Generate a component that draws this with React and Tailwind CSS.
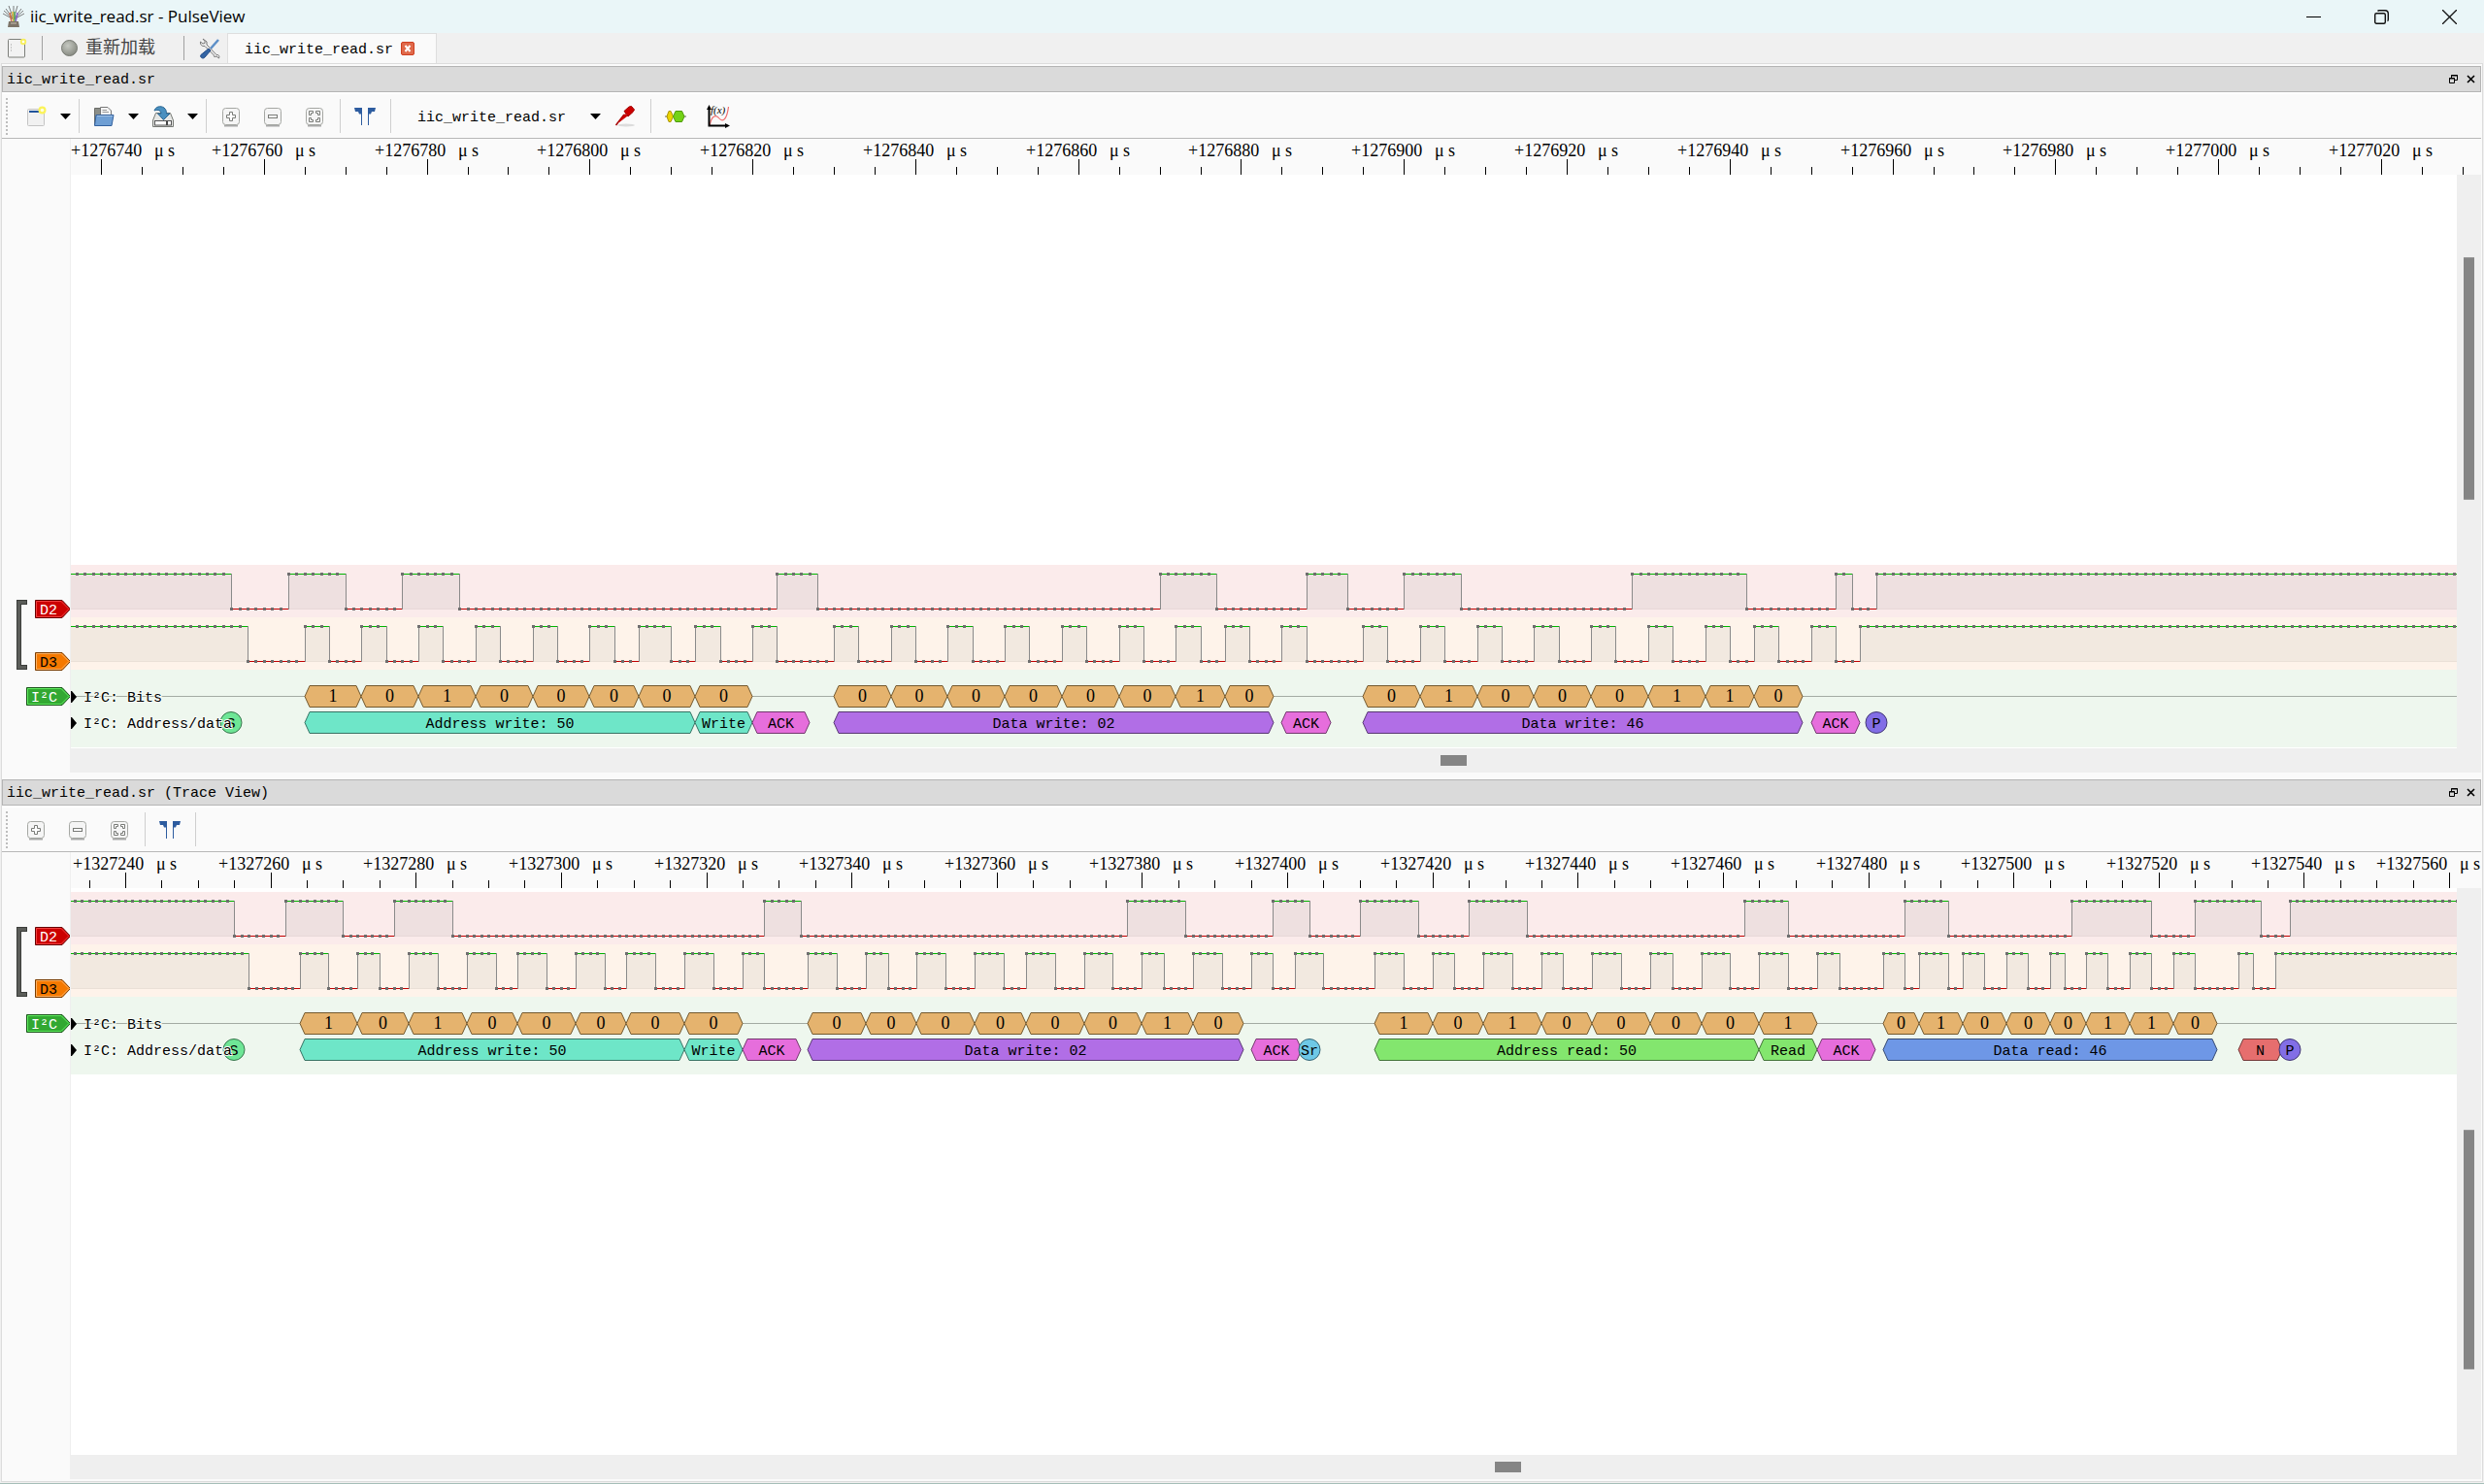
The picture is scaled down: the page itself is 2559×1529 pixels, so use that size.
import { useState } from 'react'

const mono = "font-['Liberation_Mono','Noto_Sans_CJK_SC',monospace]"

const COLORS = {
  bit: ['#e5b36e', '#73592f'],
  addrWrite: ['#6ee6c8', '#377364'],
  addrRead: ['#83e66e', '#417337'],
  ack: ['#e66edc', '#73376e'],
  nack: ['#e66e6e', '#733737'],
  dataWrite: ['#b16ee6', '#583773'],
  dataRead: ['#6e97e6', '#374b73'],
  start: ['#6ee696', '#37734b'],
  restart: ['#6ec8e6', '#376473'],
  stop: ['#826ee6', '#413773'],
}

// edge lists hold the sample numbers where the level toggles, both lines idle high
const MAIN_VIEW = {
  base: 1276740,
  x0: 31,
  step: 8.389,
  last: 300,
  lastLabel: 280,
  labelOffsets: { 0: 0 },
  d2: [16, 23, 30, 37, 44, 83, 88, 130, 137, 148, 153, 160, 167, 188, 202, 213, 215, 218],
  d3: [
    18, 25, 28, 32, 35, 39, 42, 46, 49, 53, 56, 60, 63, 66, 70, 73, 76, 80, 83,
    90, 93, 97, 100, 104, 107, 111, 114, 118, 121, 125, 128, 132, 135, 138, 141, 145, 148,
    155, 158, 162, 165, 169, 172, 176, 179, 183, 186, 190, 193, 197, 200, 203, 206, 210, 213, 216,
  ],
  bits: [
    { at: [25, 32, 39, 46, 53, 60, 66, 73, 80], value: '10100000' },
    { at: [90, 97, 104, 111, 118, 125, 132, 138, 144], value: '00000010' },
    { at: [155, 162, 169, 176, 183, 190, 197, 203, 209], value: '01000110' },
  ],
  frames: [
    { from: 25, to: 73, text: 'Address write: 50', kind: 'addrWrite' },
    { from: 73, to: 80, text: 'Write', kind: 'addrWrite' },
    { from: 80, to: 87, text: 'ACK', kind: 'ack' },
    { from: 90, to: 144, text: 'Data write: 02', kind: 'dataWrite' },
    { from: 145, to: 151, text: 'ACK', kind: 'ack' },
    { from: 155, to: 209, text: 'Data write: 46', kind: 'dataWrite' },
    { from: 210, to: 216, text: 'ACK', kind: 'ack' },
  ],
  marks: [
    { at: 16, text: 'S', kind: 'start' },
    { at: 218, text: 'P', kind: 'stop' },
  ],
}

const TRACE_VIEW = {
  base: 1327240,
  x0: 56,
  step: 7.4816,
  last: 330,
  lastLabel: 320,
  labelOffsets: { 320: 2375 },
  d2: [15, 22, 30, 37, 45, 88, 93, 138, 146, 158, 163, 170, 178, 185, 193, 223, 229, 245, 251, 268, 279, 285, 294, 298],
  d3: [
    17, 24, 28, 32, 35, 39, 43, 47, 51, 54, 58, 62, 66, 69, 73, 77, 81, 85, 88,
    94, 98, 102, 105, 109, 113, 117, 121, 124, 128, 132, 136, 140, 143, 147, 151, 155, 158, 161, 165,
    172, 176, 180, 183, 187, 191, 195, 198, 202, 206, 210, 213, 217, 221, 225, 229, 233, 236,
    242, 245, 247, 251, 253, 256, 259, 262, 265, 267, 270, 273, 276, 279, 282, 285, 291, 293, 296,
  ],
  bits: [
    { at: [24, 32, 39, 47, 54, 62, 69, 77, 85], value: '10100000' },
    { at: [94, 102, 109, 117, 124, 132, 140, 147, 154], value: '00000010' },
    { at: [172, 180, 187, 195, 202, 210, 217, 225, 233], value: '10100001' },
    { at: [242, 247, 253, 259, 265, 270, 276, 282, 288], value: '01000110' },
  ],
  frames: [
    { from: 24, to: 77, text: 'Address write: 50', kind: 'addrWrite' },
    { from: 77, to: 85, text: 'Write', kind: 'addrWrite' },
    { from: 85, to: 93, text: 'ACK', kind: 'ack' },
    { from: 94, to: 154, text: 'Data write: 02', kind: 'dataWrite' },
    { from: 155, to: 162, text: 'ACK', kind: 'ack' },
    { from: 172, to: 225, text: 'Address read: 50', kind: 'addrRead' },
    { from: 225, to: 233, text: 'Read', kind: 'addrRead' },
    { from: 233, to: 241, text: 'ACK', kind: 'ack' },
    { from: 242, to: 288, text: 'Data read: 46', kind: 'dataRead' },
    { from: 291, to: 297, text: 'N', kind: 'nack' },
  ],
  marks: [
    { at: 15, text: 'S', kind: 'start' },
    { at: 163, text: 'Sr', kind: 'restart' },
    { at: 298, text: 'P', kind: 'stop' },
  ],
}

const px = (view, t) => Math.round(view.x0 + t * view.step)

/* ---------- waveforms ---------- */

function Ruler({ view }) {
  const ticks = []
  for (let t = -15; t <= view.last; t += 5) ticks.push(t)
  const majors = ticks.filter(t => t % 20 === 0 && t >= 0 && t <= view.lastLabel)
  return (
    <svg className="block h-[37px] w-full" aria-label="Time ruler">
      {ticks.map(t => (
        <rect key={t} x={px(view, t)} y={t % 20 === 0 ? 21 : 29} width="1" height={t % 20 === 0 ? 16 : 8} fill="#000" />
      ))}
      {majors.map(t => {
        const left = view.labelOffsets[t] ?? px(view, t) - 54
        return (
          <text key={t} y="18" className="font-['Liberation_Serif',serif] text-[18px]">
            <tspan x={left}>+{view.base + t}</tspan>
            <tspan x={left + 86}>μ</tspan>
            <tspan x={left + 100}>s</tspan>
          </text>
        )
      })}
    </svg>
  )
}

function LogicTrace({ view, edges, top, bg, fill }) {
  const high = top + 9
  const low = top + 45
  const points = [-20, ...edges, view.last]
  let dots = ''
  for (let t = -8, level = 1, i = 0; t <= view.last; t++) {
    while (i < edges.length && edges[i] <= t) {
      level = 1 - level
      i++
    }
    dots += `M${px(view, t) - 1} ${(level ? high : low) + 0.5}h3`
  }
  return (
    <g shapeRendering="crispEdges">
      <rect y={top} width="100%" height="54" fill={bg} />
      <rect y={low} width="100%" height="1" fill="#000" opacity="0.08" />
      {points.slice(0, -1).map((t, i) => {
        const a = px(view, t)
        const b = px(view, points[i + 1])
        const isHigh = i % 2 === 0
        return (
          <g key={t}>
            {isHigh && <rect x={a} y={high} width={b - a} height="36" fill={fill} />}
            <rect x={a} y={isHigh ? high : low} width={b - a} height="1" fill={isHigh ? '#00b400' : '#c00000'} />
            {i > 0 && <rect x={a} y={high} width="1" height="37" fill="#8a8a8a" />}
          </g>
        )
      })}
      <path d={dots} stroke="#6e6e6e" strokeWidth="3" />
    </g>
  )
}

function Hex({ x1, x2, cy, kind, text, textClass }) {
  const [fill, stroke] = COLORS[kind]
  return (
    <g>
      <path
        d={`M${x1} ${cy}L${x1 + 5} ${cy - 11}H${x2 - 5}L${x2} ${cy}L${x2 - 5} ${cy + 11}H${x1 + 5}Z`}
        fill={fill}
        stroke={stroke}
      />
      <text x={(x1 + x2) / 2} y={cy + 5} textAnchor="middle" className={textClass}>{text}</text>
    </g>
  )
}

function RowLabel({ y, children }) {
  return (
    <g>
      <path d={`M0 ${y - 11}h1l5 6l-5 6h-1z`} fill="#000" />
      <text x="13" y={y} className={`${mono} stroke-[#f6fbf6] stroke-[2px] text-[15px] [paint-order:stroke]`}>{children}</text>
    </g>
  )
}

function Traces({ view }) {
  return (
    <svg className="block h-[188px] w-full shrink-0" aria-label="Signal traces">
      <LogicTrace view={view} edges={view.d2} top={0} bg="#fbebeb" fill="#eee0e0" />
      <LogicTrace view={view} edges={view.d3} top={54} bg="#fef3ea" fill="#f2e9e0" />
      <rect y="108" width="100%" height="80" fill="#eef7ee" />
      <rect y="135" width="100%" height="1" fill="#a3aba3" />
      {view.bits.map(group =>
        [...group.value].map((bit, i) => (
          <Hex
            key={group.at[i]}
            x1={px(view, group.at[i])}
            x2={px(view, group.at[i + 1])}
            cy={135.5}
            kind="bit"
            text={bit}
            textClass="font-['Liberation_Serif',serif] text-[18px]"
          />
        ))
      )}
      {view.frames.map(f => (
        <Hex
          key={f.from}
          x1={px(view, f.from)}
          x2={px(view, f.to)}
          cy={162.5}
          kind={f.kind}
          text={f.text}
          textClass={`${mono} text-[15px]`}
        />
      ))}
      {view.marks.map(m => (
        <g key={m.at}>
          <circle cx={px(view, m.at)} cy="162.5" r="11" fill={COLORS[m.kind][0]} stroke={COLORS[m.kind][1]} />
          <text x={px(view, m.at)} y="168" textAnchor="middle" className={`${mono} text-[15px]`}>{m.text}</text>
        </g>
      ))}
      <RowLabel y={141}>I²C: Bits</RowLabel>
      <RowLabel y={168}>I²C: Address/data</RowLabel>
    </svg>
  )
}

function Tag({ x, y, fill, light, dark, color, children }) {
  return (
    <g>
      <path d={`M${x + 0.5} ${y - 9}H62L70.5 ${y}L62 ${y + 9}H${x + 0.5}Z`} fill={fill} stroke={dark} />
      <path d={`M${x + 1.5} ${y - 8}H61L69 ${y}L61 ${y + 8}H${x + 1.5}Z`} fill="none" stroke={light} />
      <text x={x + 5} y={y + 5} fill={color} className={`${mono} text-[15px]`}>{children}</text>
    </g>
  )
}

function TraceHeader() {
  return (
    <svg className="block h-[188px] w-full shrink-0" aria-label="Channels">
      <path d="M26 38.5H17.5V105.5H26" fill="none" stroke="#3b3d3a" strokeWidth="5" />
      <path d="M25 38.5H17.5V105.5H25" fill="none" stroke="#5b5d59" strokeWidth="3" />
      <Tag x={34} y={45.5} fill="#cc0000" light="#f04040" dark="#660000" color="#fff">D2</Tag>
      <Tag x={34} y={99.5} fill="#f57900" light="#ffb060" dark="#7a3c00" color="#000">D3</Tag>
      <Tag x={25} y={135.5} fill="#32a832" light="#62ee62" dark="#195419" color="#fff">I²C</Tag>
    </svg>
  )
}

/* ---------- icons ---------- */

function Svg({ size = 22, children }) {
  return (
    <svg width={size} height={size} viewBox={`0 0 ${size} ${size}`} aria-hidden="true" className="block shrink-0">
      {children}
    </svg>
  )
}

const Arrow = () => (
  <svg width="11" height="6" viewBox="0 0 11 6" aria-hidden="true" className="block shrink-0"><path d="M0 0H11L5.5 6Z" /></svg>
)

const NewIcon = () => (
  <Svg>
    <rect x="2.5" y="3.5" width="17" height="17" rx="1" fill="#f1f1f1" stroke="#c4c4c4" />
    <rect x="4" y="5" width="12" height="2" fill="#20539b" />
    <circle cx="17.5" cy="4.5" r="4" fill="#fbf35a" />
    <circle cx="17.5" cy="4.5" r="1.8" fill="#fffde0" />
  </Svg>
)

const OpenIcon = () => (
  <Svg>
    <path d="M1.5 20V2.5H8L10 5H18V12" fill="#8b8e88" stroke="#6a6c68" />
    <path d="M7.5 12V1.5H15L18.5 5V12Z" fill="#f4f4f4" stroke="#777" />
    <path d="M9.5 4.5H14M9.5 6.5H16" stroke="#999" />
    <path d="M3 9.5H21L19 20.5H1.5Z" fill="#6f9fd4" stroke="#33619e" />
    <path d="M4 10.5H20" stroke="#a5c4e6" />
  </Svg>
)

const SaveIcon = () => (
  <Svg>
    <path d="M3.5 7.5H18.5L21.5 15V21.5H.5V15Z" fill="#e6e7e5" stroke="#777a75" />
    <rect x="2.5" y="15.5" width="17" height="4.5" fill="#fff" stroke="#555" />
    <path d="M15 16V20" stroke="#444" strokeWidth="2" />
    <path d="M2 5C3 .8 8.5 -.5 12 2C14 3.5 14.5 6 14.5 8H18L11.5 14.5L5.5 8H9C9 5 6 3.5 2 5Z" fill="#4a90c0" stroke="#2b6692" />
  </Svg>
)

function KeyCap({ children }) {
  return (
    <Svg>
      <path d="M4 20.5H18" stroke="#a8a8a8" strokeWidth="2" />
      <rect x="2.5" y="2.5" width="17" height="17" rx="3" fill="#f5f5f5" stroke="#a5a7a3" />
      <g fill="#fff" stroke="#787a76">{children}</g>
    </Svg>
  )
}

const ZoomInIcon = () => (
  <KeyCap><path d="M9.5 6.5h3v3h3v3h-3v3h-3v-3h-3v-3h3z" /></KeyCap>
)

const ZoomOutIcon = () => (
  <KeyCap><rect x="6.5" y="9.5" width="9" height="3" /></KeyCap>
)

const ZoomFitIcon = () => (
  <KeyCap>
    <path d="M5.5 9.5v-4h4v2h-2v2zM12.5 5.5h4v4h-2v-2h-2zM5.5 12.5h2v2h2v2h-4zM14.5 12.5h2v4h-4v-2h2z" />
  </KeyCap>
)

const CursorsIcon = () => (
  <Svg>
    <path d="M0 2H8V20H7V8.5H5L4 6H1Z" fill="#2d5c9f" />
    <path d="M22 2H14V20H15V8.5H17L18 6H21Z" fill="#2d5c9f" />
  </Svg>
)

const ProbeIcon = () => (
  <Svg>
    <ellipse cx="12" cy="20" rx="9" ry="1.5" fill="#dcdcdc" />
    <path d="M1.5 20L10 9" stroke="#a40000" strokeWidth="1.5" />
    <path d="M4 17L11 8L13.5 10.5L5 17Z" fill="#cc0000" />
    <path d="M10 5.5L15 1L17.5 .5L20.5 4L19 6.5L14 11Z" fill="#cc0000" stroke="#a40000" />
  </Svg>
)

const DecoderIcon = () => (
  <Svg>
    <path d="M0 11H22" stroke="#666" />
    <path d="M2 11L4 5.5H6L8.5 11L6 16.5H4Z" fill="#edd400" stroke="#a89400" />
    <path d="M8.5 11L11 5.5H17.5L20 11L17.5 16.5H11Z" fill="#73d216" stroke="#4e9a06" />
  </Svg>
)

const MathIcon = () => (
  <svg width="24" height="24" viewBox="0 0 24 24" aria-hidden="true" className="block shrink-0">
    <path d="M3 22C5 10 10 10 13 14C17 19 21 14 22.5 2" fill="none" stroke="#ef6a6a" strokeWidth="1.2" />
    <path d="M2.5 3V21.5H20" fill="none" stroke="#000" strokeWidth="2" />
    <path d="M2.5 0L5 5H0ZM24 21.5L19 19V24Z" />
    <text x="4" y="9" className="font-['Liberation_Serif',serif] text-[11px] italic">f(x)</text>
  </svg>
)

const AppIcon = () => (
  <Svg size={24}>
    <path d="M12 15L1 9M12 15L4 4M12 15L7 1M12 15L12 1M12 15L16 1M12 15L20 4M12 15L23 9M12 15L2 6M12 15L22 6" stroke="#6d6d6d" strokeWidth=".9" />
    <path d="M10 18L8 8" stroke="#d26a4a" strokeWidth="1.5" />
    <path d="M12 18L11 7" stroke="#dbb63a" strokeWidth="1.5" />
    <path d="M13 18L13 7" stroke="#55a860" strokeWidth="1.5" />
    <path d="M14 18L16 8" stroke="#8a66c8" strokeWidth="1.5" />
    <path d="M7 17H17L18 23H6Z" fill="#7d7468" />
    <path d="M9 19H15" stroke="#a39a8c" strokeWidth="2" />
  </Svg>
)

const NewSessionIcon = () => (
  <Svg>
    <rect x="2.5" y="1.5" width="17" height="18.5" rx="1" fill="#f2f2f2" stroke="#7d7f7b" />
    <path d="M5 7h1M5 10h1M5 13h1" stroke="#999" />
    <circle cx="18" cy="4" r="3.2" fill="#f7ef5e" />
    <circle cx="18" cy="4" r="1.3" fill="#fff" />
  </Svg>
)

const ToolsIcon = () => (
  <Svg>
    <path d="M4 1L8 4L8 7L18 17.5C20.5 17 21.5 19 20.5 21L18 19L16 19.5C16 20 15 19 15.5 18L6 8.5C3 9 1 7 1.5 4L4 6L6 5.5L6 3.5Z" fill="#eee" stroke="#777" />
    <path d="M20 2L12 11" stroke="#5d8fc7" strokeWidth="2.5" />
    <path d="M10 11L12 13L5.5 20.5C3.5 22 .5 19.5 2 17.5Z" fill="#3465a4" stroke="#204a87" />
  </Svg>
)

const CloseTabIcon = () => (
  <svg width="14" height="14" viewBox="0 0 14 14" aria-hidden="true" className="block">
    <rect x=".5" y=".5" width="13" height="13" rx="1.5" fill="#e0694a" stroke="#cf3f20" />
    <path d="M4.5 4L9.5 10M9.5 4L4.5 10" stroke="#fff" strokeWidth="2" />
  </svg>
)

/* ---------- window parts ---------- */

const Sep = () => <span className="h-[35px] w-px shrink-0 bg-[#cfcfcf]" />

function Tool({ label, icon, menu }) {
  return (
    <button type="button" aria-label={label} className="flex shrink-0 items-center gap-[14px]">
      {icon}
      {menu && <Arrow />}
    </button>
  )
}

function ViewTools() {
  return (
    <>
      <div className="flex items-center gap-[21px] pr-[15px] pl-[14px]">
        <Tool label="Zoom in" icon={<ZoomInIcon />} />
        <Tool label="Zoom out" icon={<ZoomOutIcon />} />
        <Tool label="Zoom to fit" icon={<ZoomFitIcon />} />
      </div>
      <Sep />
      <div className="flex items-center pr-[15px] pl-[14px]">
        <Tool label="Show cursors" icon={<CursorsIcon />} />
      </div>
      <Sep />
    </>
  )
}

function Toolbar({ children }) {
  return (
    <div className="flex h-[48px] shrink-0 items-center border-t-2 border-b border-t-white border-b-[#b8b8b8]">
      <span className="ml-1 h-[38px] w-[6px] shrink-0 border-l-2 border-dotted border-[#bdbdbd]" />
      {children}
    </div>
  )
}

function DeviceSelect() {
  const [device, setDevice] = useState('iic_write_read.sr')
  return (
    <div className="relative flex items-center">
      <select
        aria-label="Device"
        value={device}
        onChange={e => setDevice(e.target.value)}
        className="w-[189px] appearance-none bg-transparent pt-1 text-[15px] leading-5 outline-none"
      >
        <option>iic_write_read.sr</option>
      </select>
      <span className="pointer-events-none absolute right-0"><Arrow /></span>
    </div>
  )
}

function ScrollTrack({ vertical, start, size }) {
  return (
    <div className={vertical ? 'flex w-[25px] shrink-0 flex-col items-center bg-[#efefef]' : 'flex h-[25px] shrink-0 items-center bg-[#efefef] pr-[25px]'}>
      <span className="basis-0" style={{ flexGrow: start }} />
      <span
        className={vertical ? 'w-[11px] basis-0 border-y border-[#999] bg-[#858585]' : 'h-[11px] basis-0 bg-[#858585]'}
        style={{ flexGrow: size }}
      />
      <span className="basis-0" style={{ flexGrow: 1000 - start - size }} />
    </div>
  )
}

function DockTitle({ children }) {
  return (
    <div className="flex h-[27px] shrink-0 items-center justify-between border border-[#b4b4b4] bg-[#dadada] pr-[5px] pl-[4px]">
      <h2 className="pt-[3px] text-[15px] leading-5">{children}</h2>
      <div className="flex items-center gap-[9px]">
        <button type="button" aria-label="Float panel">
          <svg width="9" height="9" viewBox="0 0 9 9" aria-hidden="true" className="block">
            <path d="M2.5 3V.5H8.5V5.5H6M2 1H9M.5 3.5H5.5V8.5H.5ZM0 4H6" fill="none" stroke="#000" />
          </svg>
        </button>
        <button type="button" aria-label="Close panel">
          <svg width="9" height="9" viewBox="0 0 9 9" aria-hidden="true" className="block">
            <path d="M1 1L8 8M8 1L1 8" stroke="#000" strokeWidth="1.6" />
          </svg>
        </button>
      </div>
    </div>
  )
}

function Dock({ title, toolbar, view, alignEnd, vScroll, hScroll, className }) {
  const place = alignEnd ? 'justify-end pb-px' : 'justify-start pt-1'
  return (
    <section className={`flex min-h-0 flex-col ${className}`}>
      <DockTitle>{title}</DockTitle>
      {toolbar}
      <div className="flex min-h-[250px] flex-1">
        <div className="flex w-[71px] shrink-0 flex-col border-r border-[#efefef] pt-[37px] pb-[25px]">
          <div className={`flex flex-1 flex-col ${place}`}><TraceHeader /></div>
        </div>
        <div className="flex min-w-0 flex-1 flex-col">
          <Ruler view={view} />
          <div className="flex min-h-0 flex-1">
            <div className={`flex min-w-0 flex-1 flex-col bg-white ${place}`}><Traces view={view} /></div>
            <ScrollTrack vertical start={vScroll[0]} size={vScroll[1]} />
          </div>
          <ScrollTrack start={hScroll[0]} size={hScroll[1]} />
        </div>
      </div>
    </section>
  )
}

function TitleBar() {
  return (
    <header className="flex h-[34px] shrink-0 items-center bg-[#eaf6f8] pl-[2px]">
      <AppIcon />
      <h1 className="ml-[5px] flex-1 font-['Open_Sans',sans-serif] text-[17px]">iic_write_read.sr - PulseView</h1>
      <button type="button" aria-label="Minimize" className="flex w-[70px] justify-center">
        <svg width="15" height="15" viewBox="0 0 15 15" aria-hidden="true"><path d="M0 7.5H15" stroke="#000" /></svg>
      </button>
      <button type="button" aria-label="Restore" className="flex w-[70px] justify-center">
        <svg width="15" height="15" viewBox="0 0 15 15" aria-hidden="true" fill="none" stroke="#111" strokeWidth="1.4">
          <rect x=".7" y="3.7" width="10.6" height="10.6" rx="1.5" />
          <path d="M3.5 1.5C4 .9 4.5 .7 5 .7H11C13 .7 14.3 2 14.3 4V10C14.3 11 14 11.5 13.5 11.7" />
        </svg>
      </button>
      <button type="button" aria-label="Close" className="flex w-[71px] justify-center">
        <svg width="15" height="15" viewBox="0 0 15 15" aria-hidden="true"><path d="M0 0L15 15M15 0L0 15" stroke="#111" strokeWidth="1.3" /></svg>
      </button>
    </header>
  )
}

function SessionBar() {
  return (
    <div className="flex h-[31px] shrink-0 items-center bg-[#f0f0f0] pl-[6px]">
      <button type="button" aria-label="New session"><NewSessionIcon /></button>
      <span className="ml-[15px] h-[25px] w-px bg-[#a0a0a0]" />
      <button type="button" className="ml-[19px] flex items-center gap-2 text-[18px] leading-6 text-[#444]">
        <svg width="17" height="17" viewBox="0 0 17 17" aria-hidden="true">
          <defs>
            <radialGradient id="ball" cx="0.4" cy="0.35" r="0.7">
              <stop offset="0" stopColor="#c6c9c2" />
              <stop offset="1" stopColor="#85887f" />
            </radialGradient>
          </defs>
          <circle cx="8.5" cy="8.5" r="8" fill="url(#ball)" stroke="#777a73" />
        </svg>
        重新加载
      </button>
      <span className="ml-[29px] h-[25px] w-px bg-[#a0a0a0]" />
      <button type="button" aria-label="Settings" className="ml-[15px]"><ToolsIcon /></button>
      <div className="ml-[7px] flex h-full items-center gap-2 border border-b-0 border-[#dedede] bg-[#fafafa] pr-[22px] pl-[17px]">
        <button type="button" className="pt-[3px] text-[15px] leading-5">iic_write_read.sr</button>
        <button type="button" aria-label="Close session"><CloseTabIcon /></button>
      </div>
    </div>
  )
}

export default function App() {
  return (
    <div className={`flex h-screen min-h-[760px] flex-col overflow-hidden border-b border-[#a5beb8] bg-[#f0f0f0] text-black ${mono}`}>
      <TitleBar />
      <SessionBar />
      <main className="mx-px mb-px flex min-h-0 flex-1 flex-col gap-[7px] border border-[#dcdcdc] bg-[#fafafa] pt-[2px] pr-px pb-[2px]">
        <Dock
          title="iic_write_read.sr"
          view={MAIN_VIEW}
          alignEnd
          vScroll={[145, 421]}
          hScroll={[574, 11]}
          className="flex-[728]"
          toolbar={
            <Toolbar>
              <div className="flex items-center pr-2 pl-[14px]">
                <Tool label="New view" icon={<NewIcon />} menu />
              </div>
              <Sep />
              <div className="flex items-center gap-[14px] pr-2 pl-[14px]">
                <Tool label="Open" icon={<OpenIcon />} menu />
                <Tool label="Save" icon={<SaveIcon />} menu />
              </div>
              <Sep />
              <ViewTools />
              <div className="flex items-center gap-[14px] pr-[15px] pl-[27px]">
                <DeviceSelect />
                <Tool label="Configure channels" icon={<ProbeIcon />} />
              </div>
              <Sep />
              <div className="flex items-center gap-[21px] pl-[14px]">
                <Tool label="Add protocol decoder" icon={<DecoderIcon />} />
                <Tool label="Add math signal" icon={<MathIcon />} />
              </div>
            </Toolbar>
          }
        />
        <Dock
          title="iic_write_read.sr (Trace View)"
          view={TRACE_VIEW}
          vScroll={[428, 421]}
          hScroll={[597, 11]}
          className="flex-[721]"
          toolbar={<Toolbar><ViewTools /></Toolbar>}
        />
      </main>
    </div>
  )
}
